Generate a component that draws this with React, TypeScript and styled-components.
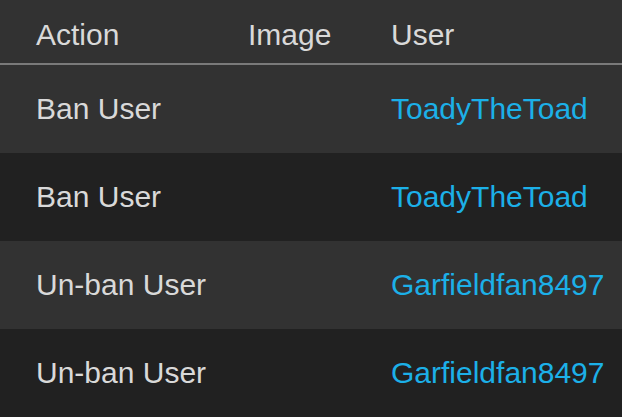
import * as React from "react";
import styled, { createGlobalStyle } from "styled-components";

type TLogEntry = {
  action: string;
  image: string;
  user: string;
};

const dataSource: TLogEntry[] = [
  { action: "Ban User", image: "", user: "ToadyTheToad" },
  { action: "Ban User", image: "", user: "ToadyTheToad" },
  { action: "Un-ban User", image: "", user: "Garfieldfan8497" },
  { action: "Un-ban User", image: "", user: "Garfieldfan8497" }
];

const GlobalStyle = createGlobalStyle`
  html, body {
    margin: 0;
    padding: 0;
    background: #222222;
    overflow: hidden;
  }
`;

export default function App() {
  return (
    <>
      <GlobalStyle />
      <LogTable>
        <HeaderRow>
          <Cell>Action</Cell>
          <Cell>Image</Cell>
          <Cell>User</Cell>
        </HeaderRow>
        {dataSource.map((entry, i) => (
          <BodyRow key={i} striped={i % 2 === 0}>
            <Cell>{entry.action}</Cell>
            <Cell>{entry.image}</Cell>
            <UserLink href="#">{entry.user}</UserLink>
          </BodyRow>
        ))}
      </LogTable>
    </>
  );
}

const LogTable = styled.div`
  width: 622px;
  font-family: "Liberation Sans", Arial, sans-serif;
  font-size: 30px;
  color: #d9d9d9;
`;

const HeaderRow = styled.div`
  display: grid;
  grid-template-columns: 212px 143px 1fr;
  align-items: center;
  height: 65px;
  padding-top: 7px;
  box-sizing: border-box;
  background: #323232;
  border-bottom: 2px solid #7a7a7a;
`;

const BodyRow = styled.div<{ striped: boolean }>`
  display: grid;
  grid-template-columns: 212px 143px 1fr;
  align-items: center;
  height: 88px;
  background: ${(p) => (p.striped ? "#323232" : "#212121")};
`;

const Cell = styled.div`
  padding-left: 36px;
  white-space: nowrap;
`;

const UserLink = styled.a`
  padding-left: 36px;
  white-space: nowrap;
  color: #1cb0e8;
  text-decoration: none;
`;
